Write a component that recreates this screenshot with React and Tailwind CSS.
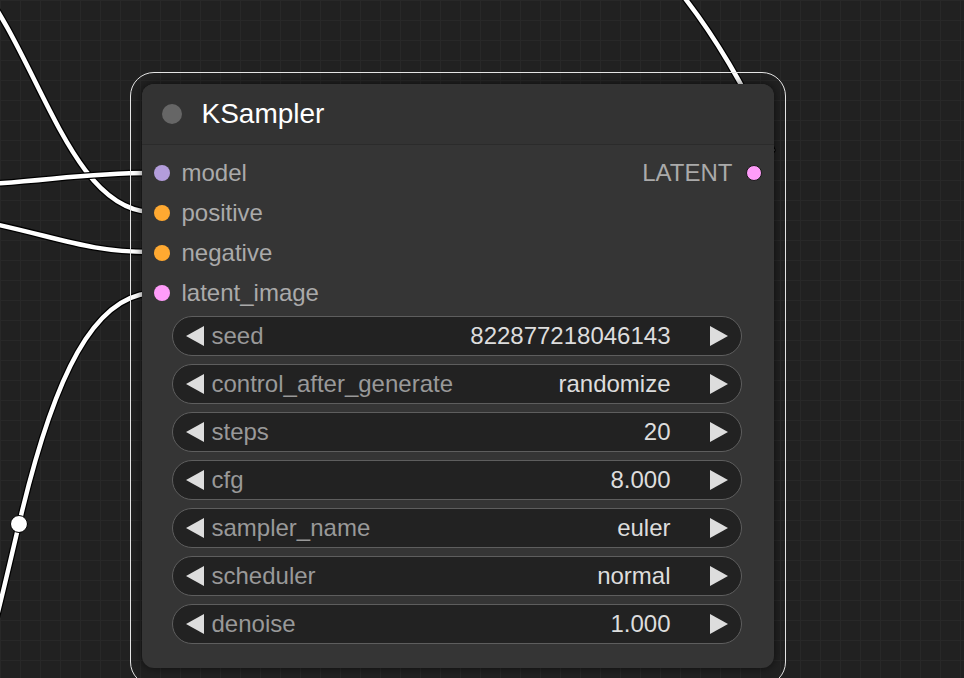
const inputs = [
  { name: 'model', color: 'bg-[#b39ddb]' },
  { name: 'positive', color: 'bg-[#ffa931]' },
  { name: 'negative', color: 'bg-[#ffa931]' },
  { name: 'latent_image', color: 'bg-[#ff9cf9]' },
]

const widgets = [
  { label: 'seed', value: '822877218046143' },
  { label: 'control_after_generate', value: 'randomize' },
  { label: 'steps', value: '20' },
  { label: 'cfg', value: '8.000' },
  { label: 'sampler_name', value: 'euler' },
  { label: 'scheduler', value: 'normal' },
  { label: 'denoise', value: '1.000' },
]

function Arrow({ dir }) {
  return (
    <svg width="18" height="20" viewBox="0 0 18 20" className="shrink-0">
      {dir === 'left'
        ? <polygon points="18,0 18,20 0,10" fill="#dddddd" />
        : <polygon points="0,0 0,20 18,10" fill="#dddddd" />}
    </svg>
  )
}

function Wires() {
  return (
    <svg className="absolute inset-0" width="964" height="678" viewBox="0 0 964 678">
      <g fill="none" strokeLinecap="round">
        {[
          'M -25 -22 C 40 60, 70 208, 150 212',
          'M -10 184 C 60 179, 90 173, 150 173',
          'M -10 223 C 60 238, 90 252, 150 252',
          'M 150 293 C 95 298, 55 370, 19 524 S -5 620, -15 660',
          'M 680 -8 C 712 32, 748 90, 772 150',
        ].map((d, i) => (
          <g key={i}>
            <path d={d} stroke="#000000" strokeWidth="7" />
            <path d={d} stroke="#ffffff" strokeWidth="4.5" />
          </g>
        ))}
        <circle cx="19" cy="524" r="8.5" fill="#ffffff" stroke="#000000" strokeWidth="1" />
      </g>
    </svg>
  )
}

export default function App() {
  return (
    <div className="relative w-[964px] h-[678px] overflow-hidden bg-[#212121] bg-[linear-gradient(#282828_1px,transparent_1px),linear-gradient(90deg,#282828_1px,transparent_1px)] bg-size-[20px_20px] font-['Liberation_Sans',Arial,sans-serif]">
      <Wires />

      <div className="absolute left-[130px] top-[72px] w-[656px] h-[614px] rounded-[24px] border-[1.5px] border-[#e4e4e4] p-[10.5px]">
        <div className="flex flex-col w-[632px] h-[584px] rounded-[12px] bg-[#353535] shadow-[0_0_10px_rgba(0,0,0,0.6)] overflow-hidden">
          <div className="flex items-center h-[61px] pl-[20px] gap-5 bg-[#333333] border-b border-[#2b2b2b]">
            <div className="w-5 h-5 rounded-full bg-[#666666]" />
            <span className="text-[28px] text-white leading-none">KSampler</span>
          </div>

          <div className="flex pt-[8px]">
            <div className="flex flex-col flex-1">
              {inputs.map(s => (
                <div key={s.name} className="flex items-center h-10 pl-3 gap-3">
                  <div className={`w-4 h-4 rounded-full ${s.color}`} />
                  <span className="text-[24px] text-[#aaaaaa] leading-none">{s.name}</span>
                </div>
              ))}
            </div>
            <div className="flex items-center h-10 pr-[12px] gap-[13px]">
              <span className="text-[24px] text-[#aaaaaa] leading-none">LATENT</span>
              <div className="w-[16px] h-[16px] rounded-full bg-[#ff9cf9] border-[1.5px] border-[#1a1a1a]" />
            </div>
          </div>

          <div className="flex flex-col gap-2 mt-[3px] ml-[30px] w-[570px]">
            {widgets.map(w => (
              <div key={w.label} className="flex items-center h-10 px-[13px] rounded-full bg-[#222222] border-[1.5px] border-[#5e5e5e]">
                <Arrow dir="left" />
                <span className="ml-[8px] text-[24px] text-[#999999] leading-none">{w.label}</span>
                <span className="ml-auto text-[24px] text-[#dddddd] leading-none">{w.value}</span>
                <span className="ml-[39px]"><Arrow dir="right" /></span>
              </div>
            ))}
          </div>
        </div>
      </div>
    </div>
  )
}
